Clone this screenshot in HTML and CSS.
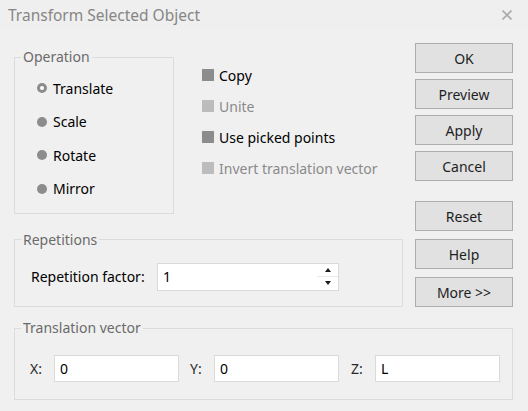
FILE: index.html
```html
<!DOCTYPE html>
<html>
<head>
<meta charset="utf-8">
<link rel="stylesheet" href="styles.css">
</head>
<body>
<div class="dialog">
  <header class="titlebar">
    <span class="title">Transform Selected Object</span>
    <svg class="close" width="10" height="10" viewBox="0 0 10 10"><path d="M0.5 0.5 L9.5 9.5 M9.5 0.5 L0.5 9.5" stroke="#ababab" stroke-width="1.6" fill="none"/></svg>
  </header>
  <main class="content">
    <div class="upper">
      <div class="left">
        <div class="top-row">
          <fieldset class="group op">
            <legend>Operation</legend>
            <div class="radio-list">
              <div class="radio-row"><span class="radio selected"></span>Translate</div>
              <div class="radio-row"><span class="radio"></span>Scale</div>
              <div class="radio-row"><span class="radio"></span>Rotate</div>
              <div class="radio-row"><span class="radio"></span>Mirror</div>
            </div>
          </fieldset>
          <div class="checks">
            <div class="check-row"><span class="box"></span>Copy</div>
            <div class="check-row disabled"><span class="box"></span>Unite</div>
            <div class="check-row"><span class="box"></span>Use picked points</div>
            <div class="check-row disabled"><span class="box"></span>Invert translation vector</div>
          </div>
        </div>
        <fieldset class="group rep">
          <legend>Repetitions</legend>
          <div class="rep-row">
            <span class="rep-label">Repetition factor:</span>
            <div class="field spin">
              <span class="value">1</span>
              <div class="spinner">
                <span class="half"><span class="arrow up"></span></span>
                <span class="half lower"><span class="arrow down"></span></span>
              </div>
            </div>
          </div>
        </fieldset>
      </div>
      <div class="buttons">
        <button class="btn">OK</button>
        <button class="btn">Preview</button>
        <button class="btn">Apply</button>
        <button class="btn">Cancel</button>
        <button class="btn reset">Reset</button>
        <button class="btn sep">Help</button>
        <button class="btn sep">More &gt;&gt;</button>
      </div>
    </div>
    <fieldset class="group vec">
      <legend>Translation vector</legend>
      <div class="vec-row">
        <span class="axis">X:</span><div class="field"><span class="value">0</span></div>
        <span class="axis y">Y:</span><div class="field"><span class="value">0</span></div>
        <span class="axis z">Z:</span><div class="field"><span class="value">L</span></div>
      </div>
    </fieldset>
  </main>
</div>
</body>
</html>
```
FILE: styles.css
```css
html, body {
  margin: 0;
  padding: 0;
  background: #f0f0f0;
}
body {
  font-family: "Noto Sans", "Open Sans", sans-serif;
  font-size: 14px;
  color: #000;
  width: 528px;
  height: 411px;
  overflow: hidden;
}
.titlebar {
  height: 30px;
  display: flex;
  align-items: center;
  justify-content: space-between;
  padding: 0 16px 0 8px;
  background: #efefef;
}
.title {
  font-size: 15.5px;
  color: #868686;
  line-height: 30px;
}
.close { display: block; }

.content {
  padding: 13px 15px 0 14px;
}
.upper {
  display: grid;
  grid-template-columns: 389px 98px;
  column-gap: 12px;
  align-items: start;
}
.top-row {
  display: flex;
  align-items: flex-start;
}
.group {
  margin: 0;
  padding: 0;
  border: 1px solid #dcdcdc;
  min-width: 0;
  box-sizing: border-box;
}
.group legend {
  padding: 0 2px;
  margin-left: 6px;
  line-height: 18px;
  color: #6b6b6b;
}
.op {
  width: 160px;
  margin-top: 5px;
}
.radio-list {
  display: flex;
  flex-direction: column;
  gap: 13.5px;
  padding: 12px 0 14px 22px;
}
.radio-row {
  height: 20px;
  display: flex;
  align-items: center;
  gap: 6px;
}
.radio {
  width: 10px;
  height: 10px;
  border-radius: 50%;
  background: #8c8c8c;
  box-sizing: border-box;
}
.radio.selected {
  background: #fff;
  border: 3px solid #8c8c8c;
}
.checks {
  margin-left: 28px;
  padding-top: 22px;
  display: flex;
  flex-direction: column;
  gap: 11px;
}
.check-row {
  height: 20px;
  display: flex;
  align-items: center;
  gap: 5px;
}
.box {
  width: 12px;
  height: 12px;
  background: #8c8c8c;
}
.check-row.disabled { color: #8a8a8a; }
.check-row.disabled .box { background: #bcbcbc; }

.rep {
  margin-top: 17px;
}
.rep-row {
  display: flex;
  align-items: center;
  padding: 14px 0 15px 16px;
}
.rep-label { width: 126px; }
.field {
  background: #fff;
  border: 1px solid #dadada;
  box-sizing: border-box;
  height: 27px;
  width: 125px;
  display: flex;
  align-items: center;
  padding-left: 5px;
}
.spin {
  width: 182px;
  height: 28px;
  padding-right: 0;
}
.value { flex: 1; }
.spinner {
  width: 21px;
  height: 100%;
  display: flex;
  flex-direction: column;
}
.half {
  flex: 1;
  display: flex;
  align-items: center;
  justify-content: center;
}
.half.lower { border-top: 1px solid #ebebeb; }
.arrow {
  width: 0;
  height: 0;
  border-left: 3px solid transparent;
  border-right: 3px solid transparent;
}
.arrow.up { border-bottom: 4px solid #1a1a1a; }
.arrow.down { border-top: 4px solid #1a1a1a; }

.buttons {
  display: flex;
  flex-direction: column;
  gap: 6px;
}
.btn {
  width: 98px;
  height: 30px;
  box-sizing: border-box;
  margin: 0;
  padding: 0;
  border: 1px solid #adadad;
  background: #e1e1e1;
  font-family: inherit;
  font-size: 14px;
  color: #1e1e1e;
}
.btn.reset { margin-top: 14px; }
.btn.sep { margin-top: 2px; }

.vec {
  margin-top: 12px;
  width: 499px;
}
.vec-row {
  display: flex;
  align-items: center;
  padding: 18px 0 17px 15px;
}
.axis {
  width: 24px;
  color: #2a2a2a;
}
.axis.y { margin-left: 11px; }
.axis.z { margin-left: 12px; }
```
